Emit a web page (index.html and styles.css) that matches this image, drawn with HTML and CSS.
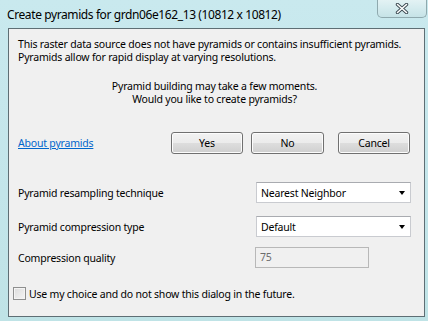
FILE: index.html
```html
<!DOCTYPE html>
<html>
<head>
<meta charset="utf-8">
<link rel="stylesheet" href="styles.css">
</head>
<body>
<div class="window">
  <div class="titlebar">
    <div class="title">Create pyramids for grdn06e162_13 (10812 x 10812)</div>
    <div class="close">
      <svg width="14" height="11" viewBox="0 0 14 11">
        <path d="M2.5 1.5 L11.5 9.5 M11.5 1.5 L2.5 9.5" stroke="#3c4a52" stroke-width="3.4" stroke-linecap="round" fill="none"/>
        <path d="M2.5 1.5 L11.5 9.5 M11.5 1.5 L2.5 9.5" stroke="#ffffff" stroke-width="1.6" stroke-linecap="round" fill="none"/>
      </svg>
    </div>
  </div>
  <div class="client">
    <p class="msg">This raster data source does not have pyramids or contains insufficient pyramids.<br>Pyramids allow for rapid display at varying resolutions.</p>
    <p class="question">Pyramid building may take a few moments.<br>Would you like to create pyramids?</p>
    <div class="actions">
      <a class="link" href="#">About pyramids</a>
      <div class="buttons">
        <button class="btn">Yes</button>
        <button class="btn btn-no">No</button>
        <button class="btn btn-cancel">Cancel</button>
      </div>
    </div>
    <div class="row row-first">
      <div class="label">Pyramid resampling technique</div>
      <div class="combo"><span>Nearest Neighbor</span><span class="arrow"></span></div>
    </div>
    <div class="row row-second">
      <div class="label">Pyramid compression type</div>
      <div class="combo"><span>Default</span><span class="arrow"></span></div>
    </div>
    <div class="row row-third">
      <div class="label">Compression quality</div>
      <div class="field-slot"><div class="textbox">75</div></div>
    </div>
    <label class="check"><span class="box"></span><span>Use my choice and do not show this dialog in the future.</span></label>
  </div>
</div>
</body>
</html>
```
FILE: styles.css
```css
* { box-sizing: border-box; }
html, body { margin: 0; padding: 0; }
body {
  width: 428px;
  height: 321px;
  overflow: hidden;
  font-family: "Noto Sans", "Open Sans", sans-serif;
  font-size: 10.5px;
  letter-spacing: -0.2px;
  color: #000;
}
.window {
  width: 428px;
  height: 321px;
  background: linear-gradient(180deg, #c9e9ee 0%, #c3e5ea 60%, #bfe3e6 100%);
  display: flex;
  flex-direction: column;
}
.titlebar {
  height: 28px;
  display: flex;
  justify-content: space-between;
  align-items: flex-start;
}
.title {
  padding-left: 7px;
  padding-top: 7px;
  font-size: 12px;
  letter-spacing: -0.4px;
  line-height: 16px;
}
.close {
  width: 50px;
  height: 18px;
  margin-right: 1px;
  border: 1px solid #8fa9ae;
  border-top: none;
  border-radius: 0 0 5px 5px;
  background: linear-gradient(180deg, #e3f2f4 0%, #d4ebee 50%, #c6e3e7 100%);
  display: flex;
  align-items: center;
  justify-content: center;
  padding-bottom: 1px;
}
.client {
  margin-left: 8px;
  width: 417px;
  height: 289px;
  background: #f0f0f0;
  border: 1px solid #5e6e74;
  padding: 9px 13px 0 9px;
  display: flex;
  flex-direction: column;
}
.msg {
  margin: 0;
  line-height: 13px;
  white-space: nowrap;
}
.question {
  margin: 16px 0 0 0;
  line-height: 13px;
  text-align: center;
}
.actions {
  margin-top: 26px;
  height: 22px;
  display: flex;
  align-items: center;
  justify-content: space-between;
  padding-right: 1px;
}
.link {
  color: #0066cc;
  text-decoration: underline;
}
.buttons {
  display: flex;
}
.btn {
  width: 72px;
  height: 22px;
  font: inherit;
  letter-spacing: inherit;
  color: #000;
  border: 1px solid #707070;
  border-radius: 3px;
  background: linear-gradient(180deg, #f2f2f2 0%, #ebebeb 49%, #dddddd 51%, #cfcfcf 100%);
  box-shadow: inset 0 0 0 1px #fcfcfc;
  padding: 0;
}
.btn-no { margin-left: 8px; width: 73px; }
.btn-cancel { margin-left: 14px; }
.row {
  display: flex;
  align-items: center;
  justify-content: space-between;
  height: 21px;
}
.row-first { margin-top: 28px; }
.row-second { margin-top: 13px; }
.row-third { margin-top: 10px; }
.label { flex: 1; }
.field-slot { width: 155px; }
.combo {
  width: 155px;
  height: 21px;
  background: #fff;
  border: 1px solid #c9cbd0;
  border-top-color: #a9abb0;
  display: flex;
  align-items: center;
  justify-content: space-between;
  padding: 0 5px 0 4px;
}
.arrow {
  width: 0;
  height: 0;
  border-left: 3.5px solid transparent;
  border-right: 3.5px solid transparent;
  border-top: 4px solid #000;
  margin-top: 1px;
}
.textbox {
  width: 114px;
  height: 21px;
  margin-left: -1px;
  border: 1px solid #b8b8b8;
  background: #f0f0f0;
  color: #6d6d6d;
  padding: 0 4px;
  line-height: 19px;
}
.check {
  margin-top: 18px;
  margin-left: -5px;
  height: 15px;
  display: flex;
  align-items: center;
  gap: 3px;
}
.box {
  width: 13px;
  height: 13px;
  border: 1px solid #8e8f8f;
  background: linear-gradient(135deg, #dcdcdc 0%, #f5f5f5 100%);
  box-shadow: inset 0 0 0 1px #f4f4f4;
}
```
